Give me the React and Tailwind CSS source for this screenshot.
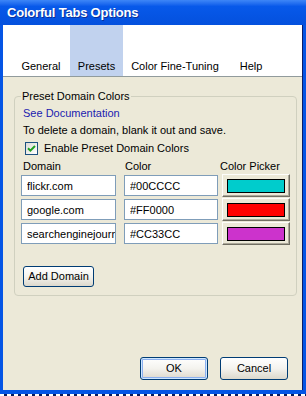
import React, { useState } from 'react';

const rows = [
  { domain: 'flickr.com', color: '#00CCCC' },
  { domain: 'google.com', color: '#FF0000' },
  { domain: 'searchenginejournal.com', color: '#CC33CC' },
];

const tabs = [
  { name: 'General', w: 'w-[52px]' },
  { name: 'Presets', w: 'w-[53px]' },
  { name: 'Color Fine-Tuning', w: 'w-[98px]' },
  { name: 'Help', w: 'w-[48px]' },
];

const xpButton =
  'border border-[#003c74] rounded-[3px] bg-linear-to-b from-white via-[#f4f3ee] to-[#dcd8cc] text-black';

export default function App() {
  const [active, setActive] = useState('Presets');
  const [enabled, setEnabled] = useState(true);

  return (
    <div className="w-[306px] h-[396px] flex flex-col bg-[#0555e5] font-['Liberation_Sans',Arial,sans-serif] text-[11px] text-black select-none">
      {/* title bar */}
      <div className="h-[25px] shrink-0 flex items-center pl-[7px] bg-linear-to-b from-[#3d86f7] via-[#0759ea] via-25% to-[#0450dd]">
        <span className="text-white font-bold text-[13px] tracking-[-0.2px] [text-shadow:1px_1px_0_#0a2f9a]">
          Colorful Tabs Options
        </span>
      </div>

      <div className="flex-1 flex flex-col ml-[3px] w-[300px] border-r border-[#0b1d6b]">
        {/* tab strip */}
        <div className="h-[52px] shrink-0 flex pl-[12px] gap-[3px] bg-white border-b border-[#919b9c]">
          {tabs.map(t => (
            <button
              key={t.name}
              onClick={() => setActive(t.name)}
              className={`${t.w} h-full flex items-end justify-center pb-[3px] leading-[14px] ${
                active === t.name ? 'bg-[#c1d2ee]' : ''
              }`}
            >
              {t.name}
            </button>
          ))}
        </div>

        {/* panel */}
        <div className="flex-1 flex flex-col bg-[#ece9d8] pt-[12px]">
          <fieldset className="ml-[11px] w-[276px] border border-[#d0d0bf] rounded-[4px] px-[6px] pb-[8px]">
            <legend className="px-[1px] leading-[14px]">Preset Domain Colors</legend>

            <div className="h-[20px] flex items-center pl-[2px]">
              <a className="text-[#1b1bb0] cursor-pointer">See Documentation</a>
            </div>
            <div className="h-[15px] flex items-center pl-[2px]">
              To delete a domain, blank it out and save.
            </div>
            <label className="h-[20px] flex items-center pl-[4px] gap-[6px]">
              <span
                onClick={() => setEnabled(!enabled)}
                className="w-[13px] h-[13px] border border-[#1c5180] bg-linear-to-br from-[#dcdcd7] to-white flex items-center justify-center"
              >
                {enabled && (
                  <svg width="9" height="9" viewBox="0 0 9 9">
                    <path d="M1 4.2 L3.4 6.6 L8 2" fill="none" stroke="#21a121" strokeWidth="2" />
                  </svg>
                )}
              </span>
              Enable Preset Domain Colors
            </label>

            <div className="h-[16px] flex items-center">
              <span className="w-[102px] pl-[2px]">Domain</span>
              <span className="w-[97px] pl-[2px]">Color</span>
              <span>Color Picker</span>
            </div>

            <div className="mt-[1px] flex flex-col gap-[3px]">
              {rows.map(r => (
                <div key={r.domain} className="flex items-center h-[21px]">
                  <input
                    defaultValue={r.domain}
                    className="w-[95px] h-[21px] border border-[#7f9db9] bg-white pl-[5px] outline-none"
                  />
                  <input
                    defaultValue={r.color}
                    className="ml-[8px] w-[94px] h-[21px] border border-[#7f9db9] bg-white pl-[5px] outline-none"
                  />
                  <button className="ml-[4px] w-[68px] h-[23px] flex items-start justify-center pt-[4px] bg-[#ece9d8] border border-t-[#fdfdfb] border-l-[#fdfdfb] border-r-[#716f64] border-b-[#716f64] shadow-[inset_-1px_-1px_0_#aca899]">
                    <span
                      className="block w-[58px] h-[14px] border border-black"
                      style={{ backgroundColor: r.color }}
                    />
                  </button>
                </div>
              ))}
            </div>

            <button className={`mt-[22px] ml-[2px] w-[71px] h-[21px] ${xpButton}`}>Add Domain</button>
          </fieldset>

          <div className="flex-1" />

          <div className="flex justify-end gap-[12px] pr-[14px] pb-[10px]">
            <button className={`w-[68px] h-[23px] ${xpButton} shadow-[inset_0_0_0_1px_#cee7ff,inset_0_0_0_2px_#8cb0ef]`}>
              OK
            </button>
            <button className={`w-[68px] h-[23px] ${xpButton}`}>Cancel</button>
          </div>
        </div>
      </div>

      {/* bottom frame edge */}
      <div className="h-[4px] shrink-0 bg-[#0555e5]" />
      <div className="h-[2px] shrink-0 bg-[repeating-linear-gradient(90deg,#ffffff_0_4px,#0a1a5a_4px_7px)]" />
    </div>
  );
}
